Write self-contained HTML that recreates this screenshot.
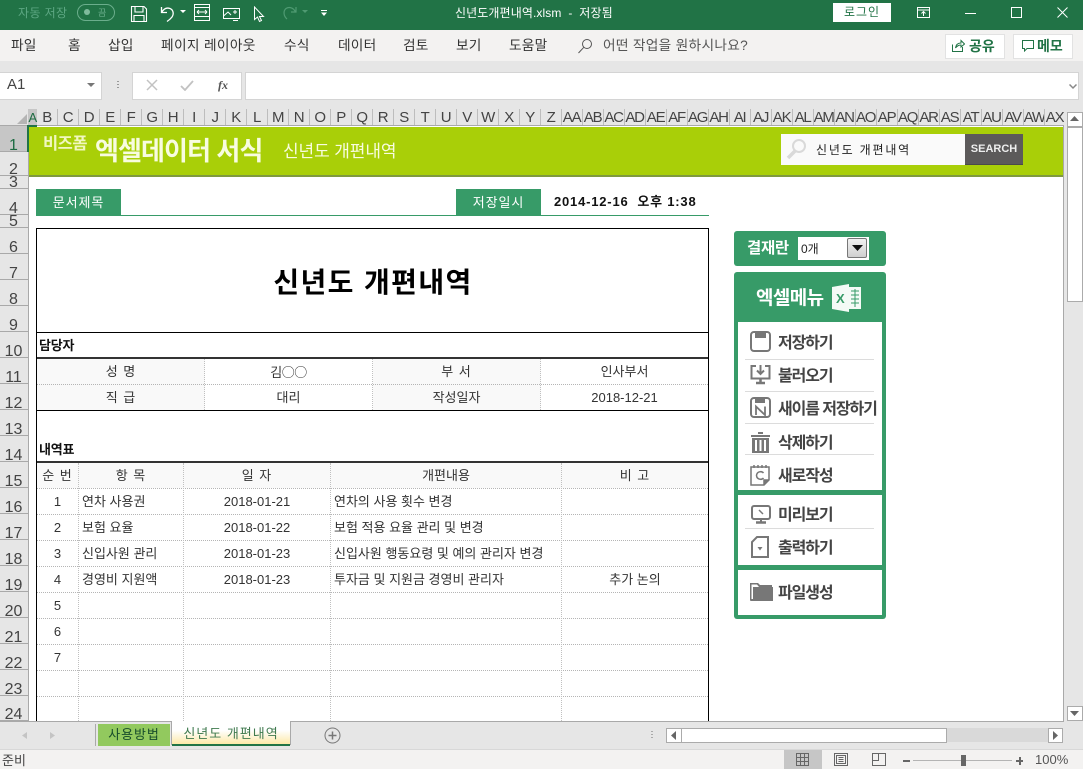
<!DOCTYPE html>
<html lang="ko"><head><meta charset="utf-8"><title>신년도개편내역</title>
<style>
html,body{margin:0;padding:0;width:1083px;height:769px;overflow:hidden;background:#fff}
body{position:relative;font-family:"Liberation Sans","Noto Sans CJK KR",sans-serif;font-size:12px;color:#333}
div,span.a,svg{position:absolute}
.t{white-space:nowrap;line-height:16px}
.c{text-align:center}
#cols{left:28px;top:109px;height:17px;width:1037px;display:flex}
#cols span{display:block;width:21px;flex:none;height:16px;border-right:1px solid #bdbdbd;box-sizing:border-box;text-align:center;font-size:15px;line-height:18px;color:#444;letter-spacing:-1.2px;overflow:hidden}
#cols span:first-child{width:8.6px;background:#c6c6c6;color:#1d6b42;border:0;overflow:visible;font-size:13px}
.r{left:0;width:28px;height:25px;background:#e6e6e6;border-bottom:1px solid #a9a9a9;text-align:center;font-size:16px;line-height:15px;color:#444;box-sizing:content-box;overflow:hidden}
.r span{position:absolute;left:0;right:1px;bottom:-2px}
.hl{height:0;border-top:1px dotted #b5b5b5}
.vl{width:0;border-left:1px dotted #c0c0c0}
.tb{font-size:13px;color:#333;white-space:nowrap;line-height:28px;height:26px}
.ctab{font-size:13.7px;letter-spacing:.2px;color:#333;white-space:nowrap;top:38px;line-height:16px}
.m{left:778px;font-size:16px;font-weight:700;color:#444;white-space:nowrap;line-height:20px;letter-spacing:-1.1px}
.sp{left:745px;width:129px;height:1px;background:#dcdcdc}
</style></head><body>

<!-- title bar -->
<div style="left:0;top:0;width:1083px;height:30px;background:#217346"></div>
<div class="t" style="left:18px;top:5px;color:#5da783;font-size:12px;letter-spacing:.4px">자동 저장</div>
<div style="left:77px;top:4px;width:36px;height:15px;border:1px solid #6bae8c;border-radius:9px"></div>
<div style="left:84px;top:9px;width:6px;height:6px;background:#7fbb9c;border-radius:50%"></div>
<div class="t" style="left:98px;top:5px;font-size:9px;color:#6bae8c">끔</div>
<svg style="left:130px;top:5px" width="18" height="18" viewBox="0 0 18 18" fill="none" stroke="#fff" stroke-width="1.1"><path d="M1.5 1.5H14L16.5 4V16.5H1.5Z"/><path d="M5 1.5V7H13V1.5M4 16.5V10.500H14V16.5"/></svg>
<svg style="left:159px;top:5px" width="18" height="18" viewBox="0 0 18 18" fill="none" stroke="#fff" stroke-width="1.3"><path d="M2.5 2V7.5H8M3 7C5 3.5 8 2.5 11 3.5C14.500 5 15 9 13 12C11.500 14 9.500 15.500 8 16.500"/></svg>
<svg style="left:180px;top:10px" width="6" height="4"><path d="M0 0H6L3 3Z" fill="#fff"/></svg>
<svg style="left:194px;top:4px" width="16" height="17" viewBox="0 0 16 17" fill="none" stroke="#fff"><path d="M.5.5H15.500V16.500H.5ZM.5 3.500H15.500M.5 12.500H15.500M3 8H13M3 8L5 6M3 8L5 10M13 8L11 6M13 8L11 10"/></svg>
<svg style="left:223px;top:7px" width="18" height="16" viewBox="0 0 18 16" fill="none" stroke="#fff"><path d="M.5 1.500H16.500V11.500H.5ZM.5 9L5 5L8 8M10 5H14M12 3V7M10 13.500H15"/></svg>
<svg style="left:253px;top:6px" width="13" height="17" viewBox="0 0 13 17" fill="none" stroke="#fff"><path d="M1.500 1V13.500L4.500 11L6.500 15.500L8.500 14.500L6.500 10.500H10.500Z"/></svg>
<svg style="left:282px;top:5px" width="17" height="16" viewBox="0 0 17 16" fill="none" stroke="#4f9a72" stroke-width="1.2"><path d="M14 2V7H9M13.500 7C11.500 2.500 7 1.500 4 3.500C1 6 1.500 11 5 14"/></svg>
<svg style="left:302px;top:10px" width="6" height="4"><path d="M0 0H6L3 3Z" fill="#4f9a72"/></svg>
<svg style="left:321px;top:9px" width="6" height="8"><path d="M0 1.500H6" stroke="#fff"/><path d="M0 3.500H6L3 7Z" fill="#fff"/></svg>
<div class="t" style="left:455px;top:5px;color:#fff;font-size:12px;letter-spacing:.1px">신년도개편내역.xlsm&nbsp; -&nbsp; 저장됨</div>
<div class="t c" style="left:833px;top:3px;width:58px;height:19px;background:#fff;color:#217346;line-height:19px;font-size:12px;letter-spacing:1px">로그인</div>
<svg style="left:917px;top:7px" width="13" height="11" viewBox="0 0 13 11" fill="none" stroke="#fff"><path d="M.5.5H12.500V10.500H.5ZM.5 3H12.500M6.500 9V5M4.500 6.500L6.500 4.500L8.500 6.500"/></svg>
<div style="left:965px;top:13px;width:11px;height:1px;background:#fff"></div>
<div style="left:1011px;top:7px;width:9px;height:9px;border:1px solid #fff"></div>
<svg style="left:1057px;top:7px" width="11" height="11"><path d="M.5.5L10.500 10.500M10.500.5L.5 10.500" stroke="#fff"/></svg>

<!-- ribbon tabs -->
<div style="left:0;top:30px;width:1083px;height:31px;background:#f3f2f1;border-bottom:1px solid #d8d8d8"></div>
<div class="ctab" style="left:11px">파일</div>
<div class="ctab" style="left:68px">홈</div>
<div class="ctab" style="left:108px">삽입</div>
<div class="ctab" style="left:161px;letter-spacing:.35px">페이지 레이아웃</div>
<div class="ctab" style="left:284px">수식</div>
<div class="ctab" style="left:338px">데이터</div>
<div class="ctab" style="left:403px">검토</div>
<div class="ctab" style="left:456px">보기</div>
<div class="ctab" style="left:509px">도움말</div>
<svg style="left:577px;top:38px" width="16" height="16" viewBox="0 0 16 16" fill="none" stroke="#555"><circle cx="10" cy="6" r="4.500"/><path d="M6.800 9.300L1.500 15"/></svg>
<div class="ctab" style="left:603px;color:#555;letter-spacing:.3px">어떤 작업을 원하시나요?</div>
<div style="left:945px;top:34px;width:58px;height:23px;background:#fff;border:1px solid #e2e2e2"></div>
<svg style="left:952px;top:39px" width="13" height="13" viewBox="0 0 13 13" fill="none" stroke="#217346"><path d="M.5 5.500V12.500H10.500V8M3.500 9C4 5.500 6 4 9 4V1.500L12.500 5L9 8V6C7 6 5 7 3.500 9Z"/></svg>
<div class="t" style="left:969px;top:38px;font-weight:700;color:#217346;font-size:14px">공유</div>
<div style="left:1013px;top:34px;width:58px;height:23px;background:#fff;border:1px solid #e2e2e2"></div>
<svg style="left:1022px;top:40px" width="12" height="12" viewBox="0 0 12 12" fill="none" stroke="#217346"><path d="M.5.5H11.500V8.500H5L2.500 11V8.500H.5Z"/></svg>
<div class="t" style="left:1037px;top:38px;font-weight:700;color:#217346;font-size:14px">메모</div>

<!-- formula bar -->
<div style="left:0;top:61px;width:1083px;height:48px;background:#e6e6e6"></div>
<div style="left:0;top:72px;width:101px;height:26px;background:#fff;border:1px solid #d4d4d4;border-left:0"></div>
<div class="t" style="left:7px;top:77px;font-size:15px;color:#444">A1</div>
<svg style="left:87px;top:83px" width="8" height="5"><path d="M0 0H8L4 4Z" fill="#777"/></svg>
<div style="left:117px;top:81px;width:2px;height:1px;background:#999;box-shadow:0 3px #999,0 6px #999"></div>
<div style="left:132px;top:72px;width:108px;height:26px;background:#fff;border:1px solid #d4d4d4"></div>
<svg style="left:146px;top:79px" width="12" height="12"><path d="M1 1L11 11M11 1L1 11" stroke="#c2c2c2" stroke-width="1.500"/></svg>
<svg style="left:180px;top:80px" width="14" height="11"><path d="M1 6L5 10L13 1" stroke="#c2c2c2" stroke-width="1.800" fill="none"/></svg>
<div class="t" style="left:218px;top:77px;font:italic 700 12px/16px 'Liberation Serif',serif;color:#555">fx</div>
<div style="left:245px;top:72px;width:832px;height:26px;background:#fff;border:1px solid #d4d4d4"></div>
<svg style="left:1069px;top:84px" width="8" height="6"><path d="M.5.5L4 4L7.500.5" stroke="#888" stroke-width="1.500" fill="none"/></svg>

<!-- column headers -->
<div style="left:0;top:109px;width:1083px;height:17px;background:#e6e6e6"></div>
<svg style="left:17px;top:114px" width="10" height="10"><path d="M10 0V10H0Z" fill="#b4b4b4"/></svg>
<div id="cols"><span>A</span><span>B</span><span>C</span><span>D</span><span>E</span><span>F</span><span>G</span><span>H</span><span>I</span><span>J</span><span>K</span><span>L</span><span>M</span><span>N</span><span>O</span><span>P</span><span>Q</span><span>R</span><span>S</span><span>T</span><span>U</span><span>V</span><span>W</span><span>X</span><span>Y</span><span>Z</span><span>AA</span><span>AB</span><span>AC</span><span>AD</span><span>AE</span><span>AF</span><span>AG</span><span>AH</span><span>AI</span><span>AJ</span><span>AK</span><span>AL</span><span>AM</span><span>AN</span><span>AO</span><span>AP</span><span>AQ</span><span>AR</span><span>AS</span><span>AT</span><span>AU</span><span>AV</span><span>AW</span><span>AX</span></div>
<div style="left:0;top:125px;width:1064px;height:1px;background:#a9a9a9"></div>
<div style="left:27px;top:125px;width:10px;height:2px;background:#217346"></div>

<!-- row headers -->
<div style="left:0;top:126px;width:28px;height:595px;background:#e6e6e6"></div>
<div class="r" style="top:126px;height:25px;background:#c6c6c6;color:#1d6b42"><span>1</span></div>
<div class="r" style="top:152px;height:23px"><span>2</span></div>
<div class="r" style="top:176px;height:12px"><span>3</span></div>
<div class="r" style="top:189px;height:25px"><span>4</span></div>
<div class="r" style="top:215px;height:12px"><span>5</span></div>
<div class="r" style="top:228px"><span>6</span></div>
<div class="r" style="top:254px"><span>7</span></div>
<div class="r" style="top:280px"><span>8</span></div>
<div class="r" style="top:306px"><span>9</span></div>
<div class="r" style="top:332px"><span>10</span></div>
<div class="r" style="top:358px"><span>11</span></div>
<div class="r" style="top:384px"><span>12</span></div>
<div class="r" style="top:410px"><span>13</span></div>
<div class="r" style="top:436px"><span>14</span></div>
<div class="r" style="top:462px"><span>15</span></div>
<div class="r" style="top:488px"><span>16</span></div>
<div class="r" style="top:514px"><span>17</span></div>
<div class="r" style="top:540px"><span>18</span></div>
<div class="r" style="top:566px"><span>19</span></div>
<div class="r" style="top:592px"><span>20</span></div>
<div class="r" style="top:618px"><span>21</span></div>
<div class="r" style="top:644px"><span>22</span></div>
<div class="r" style="top:670px"><span>23</span></div>
<div class="r" style="top:696px;height:24px"><span>24</span></div>
<div style="left:28px;top:126px;width:1px;height:595px;background:#a9a9a9"></div>
<div style="left:27px;top:126px;width:2px;height:26px;background:#217346"></div>

<!-- banner -->
<div style="left:29px;top:127px;width:1034px;height:48px;background:#a9cf08;border-bottom:2px solid #7f9a3e"></div>
<div class="t" style="left:43px;top:136px;color:#f1f7c0;font-size:16.500px;font-weight:700;letter-spacing:-.5px">비즈폼</div>
<div class="t" style="left:95px;top:136px;color:#f8fce0;font-size:26px;line-height:30px;font-weight:700;letter-spacing:-.9px">엑셀데이터 서식</div>
<div class="t" style="left:283px;top:143px;color:#f8fce0;font-size:17px;line-height:18px;letter-spacing:-.1px">신년도 개편내역</div>
<div style="left:781px;top:134px;width:184px;height:31px;background:#fafafa"></div>
<svg style="left:786px;top:138px" width="22" height="22" viewBox="0 0 22 22" fill="none" stroke="#d9d9d9" stroke-width="2"><circle cx="13" cy="8" r="6"/><path d="M9 13L2 20" stroke-width="3.500"/></svg>
<div class="t" style="left:816px;top:142px;color:#222;font-size:12px;letter-spacing:1.8px">신년도 개편내역</div>
<div class="t c" style="left:965px;top:134px;width:58px;height:30px;background:#5c5a5a;border-bottom:1px solid #4a4a4a;color:#eee;font-weight:700;font-size:11px;line-height:30px">SEARCH</div>

<!-- doc meta -->
<div style="left:36px;top:215px;width:673px;height:1px;background:#379b68"></div>
<div class="t c" style="left:36px;top:189px;width:85px;height:26px;background:#379b68;color:#fff;font-size:13px;line-height:28px;letter-spacing:.9px">문서제목</div>
<div class="t c" style="left:456px;top:189px;width:85px;height:26px;background:#379b68;color:#fff;font-size:13px;line-height:28px;letter-spacing:.9px">저장일시</div>
<div class="t" style="left:554px;top:194px;color:#111;font-weight:700;font-size:13px;letter-spacing:.8px">2014-12-16&nbsp; 오후 1:38</div>

<!-- table frame -->
<div style="left:36px;top:228px;width:671px;height:493px;border:1px solid #000;border-bottom:0"></div>
<div style="left:37px;top:359px;width:168px;height:51px;background:#f9f9f9"></div>
<div style="left:373px;top:359px;width:168px;height:51px;background:#f9f9f9"></div>
<div style="left:37px;top:463px;width:670px;height:25px;background:#f9f9f9"></div>
<div class="t c" style="left:37px;top:264px;width:670px;font-size:28px;line-height:38px;font-weight:700;color:#000;letter-spacing:1.4px;margin-left:1px">신년도 개편내역</div>
<div style="left:37px;top:332px;width:671px;height:1px;background:#000"></div>
<div class="t" style="left:39px;top:338px;font-weight:700;color:#111;font-size:13px;letter-spacing:-.2px">담당자</div>
<div style="left:37px;top:357px;width:671px;height:2px;background:#333"></div>
<div class="hl" style="left:37px;top:384px;width:671px"></div>
<div style="left:37px;top:410px;width:671px;height:1px;background:#000"></div>
<div class="vl" style="left:204px;top:359px;height:51px"></div>
<div class="vl" style="left:372px;top:359px;height:51px"></div>
<div class="vl" style="left:540px;top:359px;height:51px"></div>
<div class="tb c" style="left:37px;top:358px;width:168px;letter-spacing:1px">성 명</div>
<div class="tb c" style="left:205px;top:358px;width:167px;letter-spacing:-.5px">김<span style="font-family:'Noto Sans CJK KR',sans-serif">○○</span></div>
<div class="tb c" style="left:373px;top:358px;width:167px;letter-spacing:1px">부 서</div>
<div class="tb c" style="left:541px;top:358px;width:167px">인사부서</div>
<div class="tb c" style="left:37px;top:384px;width:168px;letter-spacing:1px">직 급</div>
<div class="tb c" style="left:205px;top:384px;width:167px">대리</div>
<div class="tb c" style="left:373px;top:384px;width:167px">작성일자</div>
<div class="tb c" style="left:541px;top:384px;width:167px">2018-12-21</div>

<div class="t" style="left:39px;top:442px;font-weight:700;color:#111;font-size:13px;letter-spacing:-.2px">내역표</div>
<div style="left:37px;top:461px;width:671px;height:2px;background:#333"></div>
<div class="hl" style="left:37px;top:488px;width:671px"></div>
<div class="hl" style="left:37px;top:514px;width:671px"></div>
<div class="hl" style="left:37px;top:540px;width:671px"></div>
<div class="hl" style="left:37px;top:566px;width:671px"></div>
<div class="hl" style="left:37px;top:592px;width:671px"></div>
<div class="hl" style="left:37px;top:618px;width:671px"></div>
<div class="hl" style="left:37px;top:644px;width:671px"></div>
<div class="hl" style="left:37px;top:670px;width:671px"></div>
<div class="hl" style="left:37px;top:696px;width:671px"></div>
<div class="vl" style="left:78px;top:463px;height:258px"></div>
<div class="vl" style="left:183px;top:463px;height:258px"></div>
<div class="vl" style="left:330px;top:463px;height:258px"></div>
<div class="vl" style="left:561px;top:463px;height:258px"></div>

<div class="tb c" style="left:37px;top:462px;width:41px;letter-spacing:1px">순 번</div>
<div class="tb c" style="left:79px;top:462px;width:104px;letter-spacing:1px">항 목</div>
<div class="tb c" style="left:184px;top:462px;width:146px;letter-spacing:1px">일 자</div>
<div class="tb c" style="left:331px;top:462px;width:230px">개편내용</div>
<div class="tb c" style="left:562px;top:462px;width:146px;letter-spacing:1px">비 고</div>

<div class="tb c" style="left:37px;top:488px;width:41px">1</div>
<div class="tb" style="left:82px;top:488px">연차 사용권</div>
<div class="tb c" style="left:184px;top:488px;width:146px">2018-01-21</div>
<div class="tb" style="left:334px;top:488px">연차의 사용 횟수 변경</div>

<div class="tb c" style="left:37px;top:514px;width:41px">2</div>
<div class="tb" style="left:82px;top:514px">보험 요율</div>
<div class="tb c" style="left:184px;top:514px;width:146px">2018-01-22</div>
<div class="tb" style="left:334px;top:514px">보험 적용 요율 관리 및 변경</div>

<div class="tb c" style="left:37px;top:540px;width:41px">3</div>
<div class="tb" style="left:82px;top:540px">신입사원 관리</div>
<div class="tb c" style="left:184px;top:540px;width:146px">2018-01-23</div>
<div class="tb" style="left:334px;top:540px">신입사원 행동요령 및 예의 관리자 변경</div>

<div class="tb c" style="left:37px;top:566px;width:41px">4</div>
<div class="tb" style="left:82px;top:566px">경영비 지원액</div>
<div class="tb c" style="left:184px;top:566px;width:146px">2018-01-23</div>
<div class="tb" style="left:334px;top:566px">투자금 및 지원금 경영비 관리자</div>
<div class="tb c" style="left:562px;top:566px;width:146px">추가 논의</div>

<div class="tb c" style="left:37px;top:592px;width:41px">5</div>
<div class="tb c" style="left:37px;top:618px;width:41px">6</div>
<div class="tb c" style="left:37px;top:644px;width:41px">7</div>

<!-- approval -->
<div style="left:734px;top:231px;width:152px;height:35px;background:#379b68;border-radius:3px"></div>
<div class="t" style="left:747px;top:240px;color:#fff;font-size:15.500px;line-height:18px;font-weight:700;letter-spacing:-.3px">결재란</div>
<div style="left:798px;top:237px;width:71px;height:23px;background:#fff"></div>
<div class="t" style="left:801px;top:241px;font-size:12px;color:#222">0개</div>
<div style="left:847px;top:238px;width:20px;height:20px;background:linear-gradient(#f2f2f2,#cfcfcf);border:1px solid #777;border-radius:2px;box-sizing:border-box"></div>
<svg style="left:852px;top:245px" width="11" height="6"><path d="M0 0H11L5.500 6Z" fill="#111"/></svg>

<!-- menu -->
<div style="left:734px;top:272px;width:152px;height:347px;background:#379b68;border-radius:3px"></div>
<div class="t" style="left:756px;top:288px;color:#fff;font-size:19px;line-height:21px;font-weight:700;letter-spacing:-.6px">엑셀메뉴</div>
<svg style="left:832px;top:284px" width="30" height="28" viewBox="0 0 30 28"><path d="M0 3L17 0V28L0 25Z" fill="#f4faf6"/><path d="M17 3H29V25H17Z" fill="#f4faf6"/><path d="M19 7H27M19 11H27M19 15H27M19 19H27M23 5V23" stroke="#379b68"/><text x="4" y="19" font-size="13" font-weight="700" fill="#379b68" font-family="Liberation Sans">X</text></svg>
<div style="left:738px;top:322px;width:144px;height:168px;background:#fff"></div>
<div style="left:738px;top:495px;width:144px;height:70px;background:#fff"></div>
<div style="left:738px;top:570px;width:144px;height:45px;background:#fff"></div>
<div class="sp" style="top:359px"></div>
<div class="sp" style="top:391px"></div>
<div class="sp" style="top:423px"></div>
<div class="sp" style="top:454px"></div>
<div class="sp" style="top:528px"></div>
<div class="m" style="top:334px">저장하기</div>
<div class="m" style="top:367px">불러오기</div>
<div class="m" style="top:400px">새이름 저장하기</div>
<div class="m" style="top:434px">삭제하기</div>
<div class="m" style="top:467px">새로작성</div>
<div class="m" style="top:506px">미리보기</div>
<div class="m" style="top:539px">출력하기</div>
<div class="m" style="top:584px">파일생성</div>
<svg style="left:750px;top:331px" width="21" height="21" viewBox="0 0 21 21" fill="none" stroke="#777" stroke-width="2"><rect x="1" y="1" width="19" height="19" rx="3"/><rect x="5" y="1" width="11" height="6" fill="#777" stroke="none"/></svg>
<svg style="left:750px;top:364px" width="21" height="21" viewBox="0 0 21 21" fill="none" stroke="#777" stroke-width="2"><path d="M6 2H1.500V14.500H19.500V2H15"/><path d="M10.500 1V9M7 6.500L10.500 10L14 6.500"/><path d="M6 19H15M10.500 15V19" stroke-width="2.500"/></svg>
<svg style="left:750px;top:397px" width="21" height="21" viewBox="0 0 21 21" fill="none" stroke="#777" stroke-width="2"><rect x="1" y="1" width="19" height="19" rx="3"/><rect x="5" y="1" width="10" height="5" fill="#777" stroke="none"/><path d="M6 18V9.500L15 18V9.500" stroke-width="1.800"/></svg>
<svg style="left:751px;top:431px" width="19" height="22" viewBox="0 0 19 22" fill="#777"><path d="M0 4H19V6H0ZM7 1H12V3H7Z"/><path d="M1 7H18V22H1ZM4 9V20H6V9ZM8.500 9V20H10.500V9ZM13 9V20H15V9Z" fill-rule="evenodd"/></svg>
<svg style="left:750px;top:464px" width="20" height="22" viewBox="0 0 20 22" fill="none" stroke="#777" stroke-width="1.500"><path d="M1 3H19V16L14 21H1Z"/><path d="M14 21V16H19" fill="#777"/><path d="M4 1V4M8 1V4M12 1V4M16 1V4"/><path d="M13.500 9C12 7 7 7 6.500 11.500C7 16 12 16 13.500 14"/></svg>
<svg style="left:751px;top:505px" width="20" height="19" viewBox="0 0 20 19" fill="none" stroke="#777" stroke-width="2"><rect x="1" y="1" width="18" height="13" rx="2"/><path d="M5 17.500H15" stroke-width="2.500"/><path d="M10 14V17"/><path d="M8 5L12 9" stroke-width="1.500"/></svg>
<svg style="left:751px;top:536px" width="18" height="22" viewBox="0 0 18 22" fill="none" stroke="#777" stroke-width="2"><path d="M6 1H17V21H1V6Z"/><path d="M6.500 11H11.500L9 14.500Z" fill="#777" stroke="none"/></svg>
<svg style="left:750px;top:582px" width="23" height="19" viewBox="0 0 23 19" fill="#777"><path d="M0 1H8L10 3H22V5H9L7 2.500H1.500V17H3V19H1A1 1 0 0 1 0 18Z"/><path d="M3 5H23V19H3Z"/></svg>

<!-- scrollbar vertical -->
<div style="left:1064px;top:109px;width:19px;height:612px;background:#e6e6e6"></div>
<div style="left:1063px;top:126px;width:1px;height:595px;background:#a9a9a9"></div>
<div style="left:1067px;top:112px;width:14px;height:13px;background:#fff;border:1px solid #ababab"></div>
<svg style="left:1070px;top:116px" width="9" height="5"><path d="M0 5H9L4.500 0Z" fill="#666"/></svg>
<div style="left:1067px;top:127px;width:14px;height:173px;background:#fff;border:1px solid #ababab"></div>
<div style="left:1067px;top:706px;width:14px;height:13px;background:#fff;border:1px solid #ababab"></div>
<svg style="left:1070px;top:711px" width="9" height="5"><path d="M0 0H9L4.500 5Z" fill="#666"/></svg>

<!-- sheet tabs -->
<div style="left:0;top:721px;width:1083px;height:28px;background:#e6e6e6"></div>
<div style="left:0;top:721px;width:1064px;height:1px;background:#a9a9a9"></div>
<svg style="left:22px;top:732px" width="5" height="7"><path d="M5 0V7L0 3.500Z" fill="#c4c4c4"/></svg>
<svg style="left:50px;top:732px" width="5" height="7"><path d="M0 0V7L5 3.500Z" fill="#c4c4c4"/></svg>
<div style="left:95px;top:724px;width:1px;height:22px;background:#a9a9a9"></div>
<div class="t c" style="left:98px;top:724px;width:72px;height:22px;background:#92c95e;color:#174c2b;line-height:22px;font-size:13px;letter-spacing:.9px">사용방법</div>
<div class="t c" style="left:172px;top:721px;width:118px;height:23px;background:linear-gradient(#fff 40%,#fde9a8);color:#3f7a4e;line-height:26px;font-size:13px;letter-spacing:1px;border-bottom:2px solid #217346">신년도 개편내역</div>
<div style="left:171px;top:721px;width:1px;height:24px;background:#a9a9a9"></div>
<div style="left:290px;top:721px;width:1px;height:24px;background:#a9a9a9"></div>
<svg style="left:324px;top:727px" width="17" height="17" viewBox="0 0 17 17" fill="none" stroke="#777"><circle cx="8.500" cy="8.500" r="7.500"/><path d="M4.500 8.500H12.500M8.500 4.500V12.500" stroke-width="1.500"/></svg>
<div style="left:651px;top:731px;width:2px;height:1px;background:#aaa;box-shadow:0 3px #aaa,0 6px #aaa"></div>

<!-- h scrollbar -->
<div style="left:666px;top:728px;width:396px;height:14px;background:#d9d9d9"></div>
<div style="left:666px;top:728px;width:14px;height:13px;background:#fff;border:1px solid #ababab"></div>
<svg style="left:671px;top:731px" width="5" height="9"><path d="M5 0V9L0 4.500Z" fill="#666"/></svg>
<div style="left:681px;top:728px;width:264px;height:13px;background:#fff;border:1px solid #ababab"></div>
<div style="left:1048px;top:728px;width:13px;height:13px;background:#fff;border:1px solid #ababab"></div>
<svg style="left:1053px;top:731px" width="5" height="9"><path d="M0 0V9L5 4.500Z" fill="#666"/></svg>

<!-- status bar -->
<div style="left:0;top:749px;width:1083px;height:20px;background:#f3f2f1;border-top:1px solid #d8d8d8;box-sizing:border-box"></div>
<div class="t" style="left:2px;top:753px;color:#444;font-size:13px">준비</div>
<div style="left:784px;top:750px;width:38px;height:19px;background:#c6c6c6"></div>
<svg style="left:796px;top:753px" width="13" height="13" viewBox="0 0 13 13" fill="none" stroke="#666"><path d="M.5.5H12.500V12.500H.5ZM.5 4.500H12.500M.5 8.500H12.500M4.500.5V12.500M8.500.5V12.500"/></svg>
<svg style="left:834px;top:753px" width="14" height="13" viewBox="0 0 14 13" fill="none" stroke="#666"><path d="M.5.5H13.500V12.500H.5ZM2.500 2.500H11.500V10.500H2.500ZM4.500 4.500H9.500M4.500 6.500H9.500M4.500 8.500H9.500"/></svg>
<svg style="left:872px;top:753px" width="14" height="13" viewBox="0 0 14 13" fill="none" stroke="#666"><path d="M.5.5H13.500V12.500H.5ZM.5 7.500H6.500V.5"/></svg>
<div style="left:903px;top:760px;width:7px;height:2px;background:#666"></div>
<div style="left:913px;top:760px;width:99px;height:1px;background:#b4b4b4"></div>
<div style="left:961px;top:755px;width:5px;height:11px;background:#666"></div>
<div style="left:1016px;top:760px;width:7px;height:2px;background:#666"></div>
<div style="left:1018.500px;top:757px;width:2px;height:8px;background:#666"></div>
<div class="t" style="left:1035px;top:752px;color:#555;font-size:13px">100%</div>
</body></html>
